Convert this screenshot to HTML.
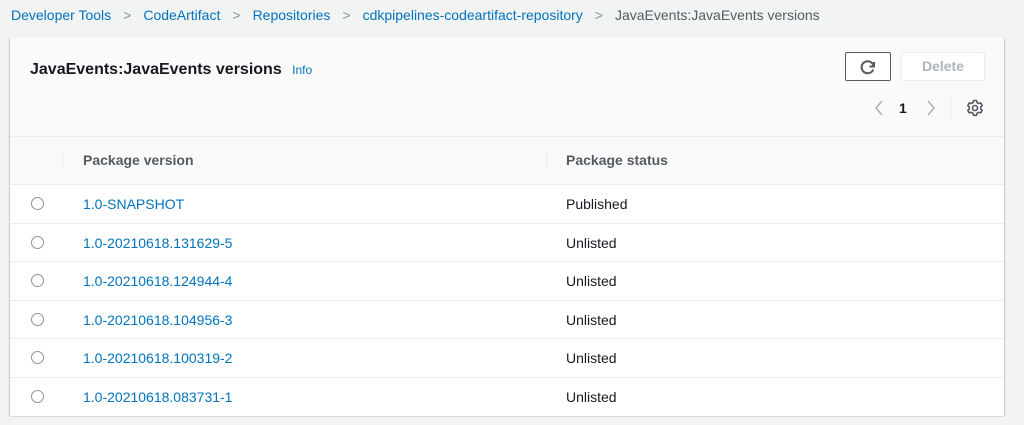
<!DOCTYPE html>
<html><head><style>
body{margin:0;width:1024px;height:425px;background:#f2f3f3;font-family:"Liberation Sans",sans-serif;font-size:14px;color:#16191f;position:relative;overflow:hidden}
.a{position:absolute}
.bc{top:7px;left:11px;color:#0073bb;font-size:14px;white-space:nowrap}
.bc span.s{color:#879596;margin:0 12px}
.bc .cur{color:#545b64}
.card{left:10px;top:38px;width:994px;height:377px;background:#fafafa;box-shadow:0 1px 1px rgba(0,28,36,.3),1px 1px 1px rgba(0,28,36,.15),-1px 1px 1px rgba(0,28,36,.15)}
.row{left:0;width:994px;height:38px;background:#fff;border-top:1px solid #eaeded}
.rad{position:absolute;left:21px;top:12px;width:11px;height:11px;border:1px solid #879596;border-radius:50%}
.v{position:absolute;left:73px;top:11px;color:#0073bb}
.st{position:absolute;left:556px;top:11px}
</style></head><body>
<div class="a bc">Developer Tools<span class="s">&gt;</span>CodeArtifact<span class="s">&gt;</span>Repositories<span class="s">&gt;</span>cdkpipelines-codeartifact-repository<span class="s">&gt;</span><span class="cur">JavaEvents:JavaEvents versions</span></div>
<div class="a card">
 <div class="a" style="left:20px;top:23px;font-weight:bold;font-size:16px">JavaEvents:JavaEvents versions <span style="font-weight:normal;font-size:12px;color:#0073bb;margin-left:6px">Info</span></div>
 <div class="a" style="left:835px;top:14px;width:44px;height:27px;border:1px solid #545b64;border-radius:2px;background:#fff">
  <svg width="44" height="27" viewBox="0 0 44 27"><path d="M28 9 V13.5 H23.5 M27.5 13 A6 6 0 1 0 27.2 16.5" fill="none" stroke="#545b64" stroke-width="2"/></svg></div>
 <div class="a" style="left:891px;top:14px;width:82px;height:27px;border:1px solid #eaeded;border-radius:2px;background:#fff;color:#aab7b8;font-weight:bold;text-align:center;line-height:27px">Delete</div>
 <svg class="a" style="left:855px;top:60px" width="80" height="20"><path d="M17 3 L11 10 L17 17" fill="none" stroke="#aab7b8" stroke-width="1.6"/><path d="M63 3 L69 10 L63 17" fill="none" stroke="#aab7b8" stroke-width="1.6"/><text x="34" y="15" font-family="Liberation Sans" font-weight="bold" font-size="14" fill="#16191f">1</text></svg>
 <div class="a" style="left:940px;top:56px;width:1px;height:28px;background:#eaeded"></div>
 <svg class="a" style="left:955px;top:60px" width="20" height="20" viewBox="0 0 20 20"><circle cx="10" cy="10" r="2.5" fill="none" stroke="#545b64" stroke-width="1.6"/><path d="M8.5 2.5h3l.5 2 1.7 1 2-.6 1.5 2.6-1.5 1.4v2l1.5 1.4-1.5 2.6-2-.6-1.7 1-.5 2h-3l-.5-2-1.7-1-2 .6-1.5-2.6 1.5-1.4v-2L2.8 7.5 4.3 4.9l2 .6 1.7-1z" fill="none" stroke="#545b64" stroke-width="1.6" stroke-linejoin="round"/></svg>
 <div class="a" style="left:0;top:98px;width:994px;height:48px;border-top:1px solid #eaeded;background:#fafafa">
  <div class="a" style="left:52px;top:14px;width:1px;height:20px;background:#eaeded"></div>
  <div class="a" style="left:536px;top:14px;width:1px;height:20px;background:#eaeded"></div>
  <div class="a" style="left:73px;top:15px;font-weight:bold;color:#545b64">Package version</div>
  <div class="a" style="left:556px;top:15px;font-weight:bold;color:#545b64">Package status</div>
 </div>
 <div class="a row" style="top:146px"><div class="rad"></div><div class="v">1.0-SNAPSHOT</div><div class="st">Published</div></div>
 <div class="a row" style="top:185px"><div class="rad"></div><div class="v">1.0-20210618.131629-5</div><div class="st">Unlisted</div></div>
 <div class="a row" style="top:223px"><div class="rad"></div><div class="v">1.0-20210618.124944-4</div><div class="st">Unlisted</div></div>
 <div class="a row" style="top:262px"><div class="rad"></div><div class="v">1.0-20210618.104956-3</div><div class="st">Unlisted</div></div>
 <div class="a row" style="top:300px"><div class="rad"></div><div class="v">1.0-20210618.100319-2</div><div class="st">Unlisted</div></div>
 <div class="a row" style="top:339px"><div class="rad"></div><div class="v">1.0-20210618.083731-1</div><div class="st">Unlisted</div></div>
</div>
</body></html>
